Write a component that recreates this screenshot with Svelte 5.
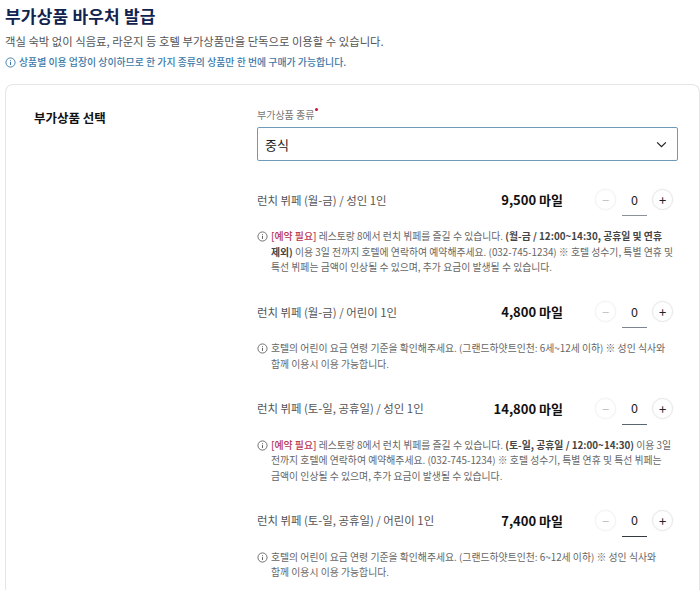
<script>
	const items = [
		{
			name: '런치 뷔페 (월-금) / 성인 1인',
			price: '9,500 마일',
			line: '#8a9199',
			reserve: true,
			before: ' 레스토랑 8에서 런치 뷔페를 즐길 수 있습니다. ',
			strong: '(월-금 / 12:00~14:30, 공휴일 및 연휴 제외)',
			after: ' 이용 3일 전까지 호텔에 연락하여 예약해주세요. (032-745-1234) ※ 호텔 성수기, 특별 연휴 및 특선 뷔페는 금액이 인상될 수 있으며, 추가 요금이 발생될 수 있습니다.'
		},
		{
			name: '런치 뷔페 (월-금) / 어린이 1인',
			price: '4,800 마일',
			line: '#7d8690',
			before: '호텔의 어린이 요금 연령 기준을 확인해주세요. (그랜드하얏트인천: 6세~12세 이하) ※ 성인 식사와 함께 이용시 이용 가능합니다.'
		},
		{
			name: '런치 뷔페 (토-일, 공휴일) / 성인 1인',
			price: '14,800 마일',
			line: '#5b6570',
			reserve: true,
			before: ' 레스토랑 8에서 런치 뷔페를 즐길 수 있습니다. ',
			strong: '(토-일, 공휴일 / 12:00~14:30)',
			after: ' 이용 3일 전까지 호텔에 연락하여 예약해주세요. (032-745-1234) ※ 호텔 성수기, 특별 연휴 및 특선 뷔페는 금액이 인상될 수 있으며, 추가 요금이 발생될 수 있습니다.'
		},
		{
			name: '런치 뷔페 (토-일, 공휴일) / 어린이 1인',
			price: '7,400 마일',
			line: '#333a42',
			before: '호텔의 어린이 요금 연령 기준을 확인해주세요. (그랜드하얏트인천: 6~12세 이하) ※ 성인 식사와 함께 이용시 이용 가능합니다.'
		}
	];
</script>

{#snippet infoIcon()}
	<svg class="info-icon" viewBox="0 0 12 12" width="11" height="11" fill="none" stroke="currentColor">
		<circle cx="6" cy="6" r="5" stroke-width="1" />
		<path d="M6 5.2v3.4M6 3.2v1" stroke-width="1.1" />
	</svg>
{/snippet}

<div class="page">
	<h1>부가상품 바우처 발급</h1>
	<p class="sub">객실 숙박 없이 식음료, 라운지 등 호텔 부가상품만을 단독으로 이용할 수 있습니다.</p>
	<p class="notice">{@render infoIcon()}<span>상품별 이용 업장이 상이하므로 한 가지 종류의 상품만 한 번에 구매가 가능합니다.</span></p>

	<section class="card">
		<h2>부가상품 선택</h2>
		<div class="form">
			<div class="label">부가상품 종류<i class="req"></i></div>
			<div class="select">
				<span>중식</span>
				<svg viewBox="0 0 12 8" width="11" height="7" fill="none" stroke="#222" stroke-width="1.4">
					<path d="M1 1.5l5 5 5-5" />
				</svg>
			</div>

			{#each items as item}
				<div class="item">
					<div class="row">
						<div class="name">{item.name}</div>
						<div class="price">{item.price}</div>
						<div class="counter">
							<span class="round minus">−</span>
							<span class="value" style="border-color: {item.line}">0</span>
							<span class="round plus">+</span>
						</div>
					</div>
					<div class="note">
						{@render infoIcon()}
						<p>
							{#if item.reserve}<span class="red">[예약 필요]</span>{/if}{item.before}{#if item.strong}<b>{item.strong}</b>{/if}{item.after ?? ''}
						</p>
					</div>
				</div>
			{/each}
		</div>
	</section>
</div>

<style>
	:global(body) {
		background: #fff;
		font-family: 'Noto Sans CJK KR', 'Noto Sans', sans-serif;
		overflow: hidden;
	}
	.page {
		display: flex;
		flex-direction: column;
		height: 590px;
		overflow: hidden;
		padding: 0 5px;
		box-sizing: border-box;
	}
	h1 {
		margin: 0;
		padding-top: 2px;
		font-size: 17px;
		line-height: 27px;
		font-weight: 700;
		color: #10244f;
		letter-spacing: 0.2px;
	}
	.sub {
		margin: 4px 0 0;
		font-size: 11.35px;
		line-height: 17px;
		color: #555;
	}
	.notice {
		display: flex;
		align-items: center;
		gap: 3px;
		margin: 5px 0 0;
		font-size: 9.9px;
		line-height: 15px;
		font-weight: 500;
		color: #3a78a8;
	}
	.card {
		display: flex;
		flex: 1;
		margin-top: 14px;
		padding: 22px 0 0 28px;
		border: 1px solid #e6e6e6;
		border-bottom: 0;
		border-radius: 8px 8px 0 0;
		width: 695px;
		box-sizing: border-box;
	}
	h2 {
		width: 223px;
		margin: 1px 0 0;
		font-size: 12.5px;
		line-height: 20px;
		font-weight: 700;
		color: #111;
	}
	.form {
		width: 421px;
	}
	.label {
		font-size: 10px;
		line-height: 15px;
		color: #777;
	}
	.req {
		display: inline-block;
		width: 3px;
		height: 3px;
		margin-left: 1px;
		vertical-align: 8px;
		border-radius: 50%;
		background: #c8102e;
	}
	.select {
		display: flex;
		align-items: center;
		justify-content: space-between;
		height: 34px;
		margin-top: 5px;
		padding: 0 10px 0 7px;
		border: 1px solid #6f9ab8;
		border-radius: 2px;
		box-sizing: border-box;
		font-size: 13px;
		color: #222;
	}
	.item {
		margin-top: 22px;
	}
	.item + .item {
		margin-top: 19.5px;
	}
	.row {
		display: flex;
		align-items: center;
		height: 33px;
	}
	.name {
		flex: 1;
		font-size: 11.4px;
		color: #555;
	}
	.price {
		font-size: 13px;
		font-weight: 700;
		color: #111;
	}
	.counter {
		display: flex;
		align-items: center;
		width: 115px;
		padding-left: 32px;
		box-sizing: border-box;
	}
	.round {
		display: flex;
		align-items: center;
		justify-content: center;
		width: 21px;
		height: 21px;
		border: 1px solid #e6e6e6;
		border-radius: 50%;
		box-sizing: border-box;
		font-size: 13px;
		line-height: 1;
		color: #222;
		box-shadow: 0 0 2px rgba(0, 0, 0, 0.06);
	}
	.minus {
		border-color: #f2f2f2;
		color: #c4c4c4;
	}
	.value {
		width: 25px;
		height: 33px;
		margin: 0 5px 0 6px;
		display: flex;
		align-items: center;
		justify-content: center;
		border-bottom: 1px solid;
		box-sizing: border-box;
		font-size: 12.5px;
		color: #222;
	}
	.note {
		display: flex;
		gap: 3px;
		margin-top: 13px;
		font-size: 9.85px;
		line-height: 15.5px;
		color: #666;
	}
	.note p {
		margin: 0;
		flex: 1;
		padding-right: 3px;
		word-break: keep-all;
	}
	.note b {
		font-weight: 700;
		color: #444;
	}
	.red {
		color: #b8304f;
		font-weight: 500;
	}
	.info-icon {
		flex-shrink: 0;
		margin-top: 2px;
	}
	.notice .info-icon {
		margin-top: 0;
	}
</style>
